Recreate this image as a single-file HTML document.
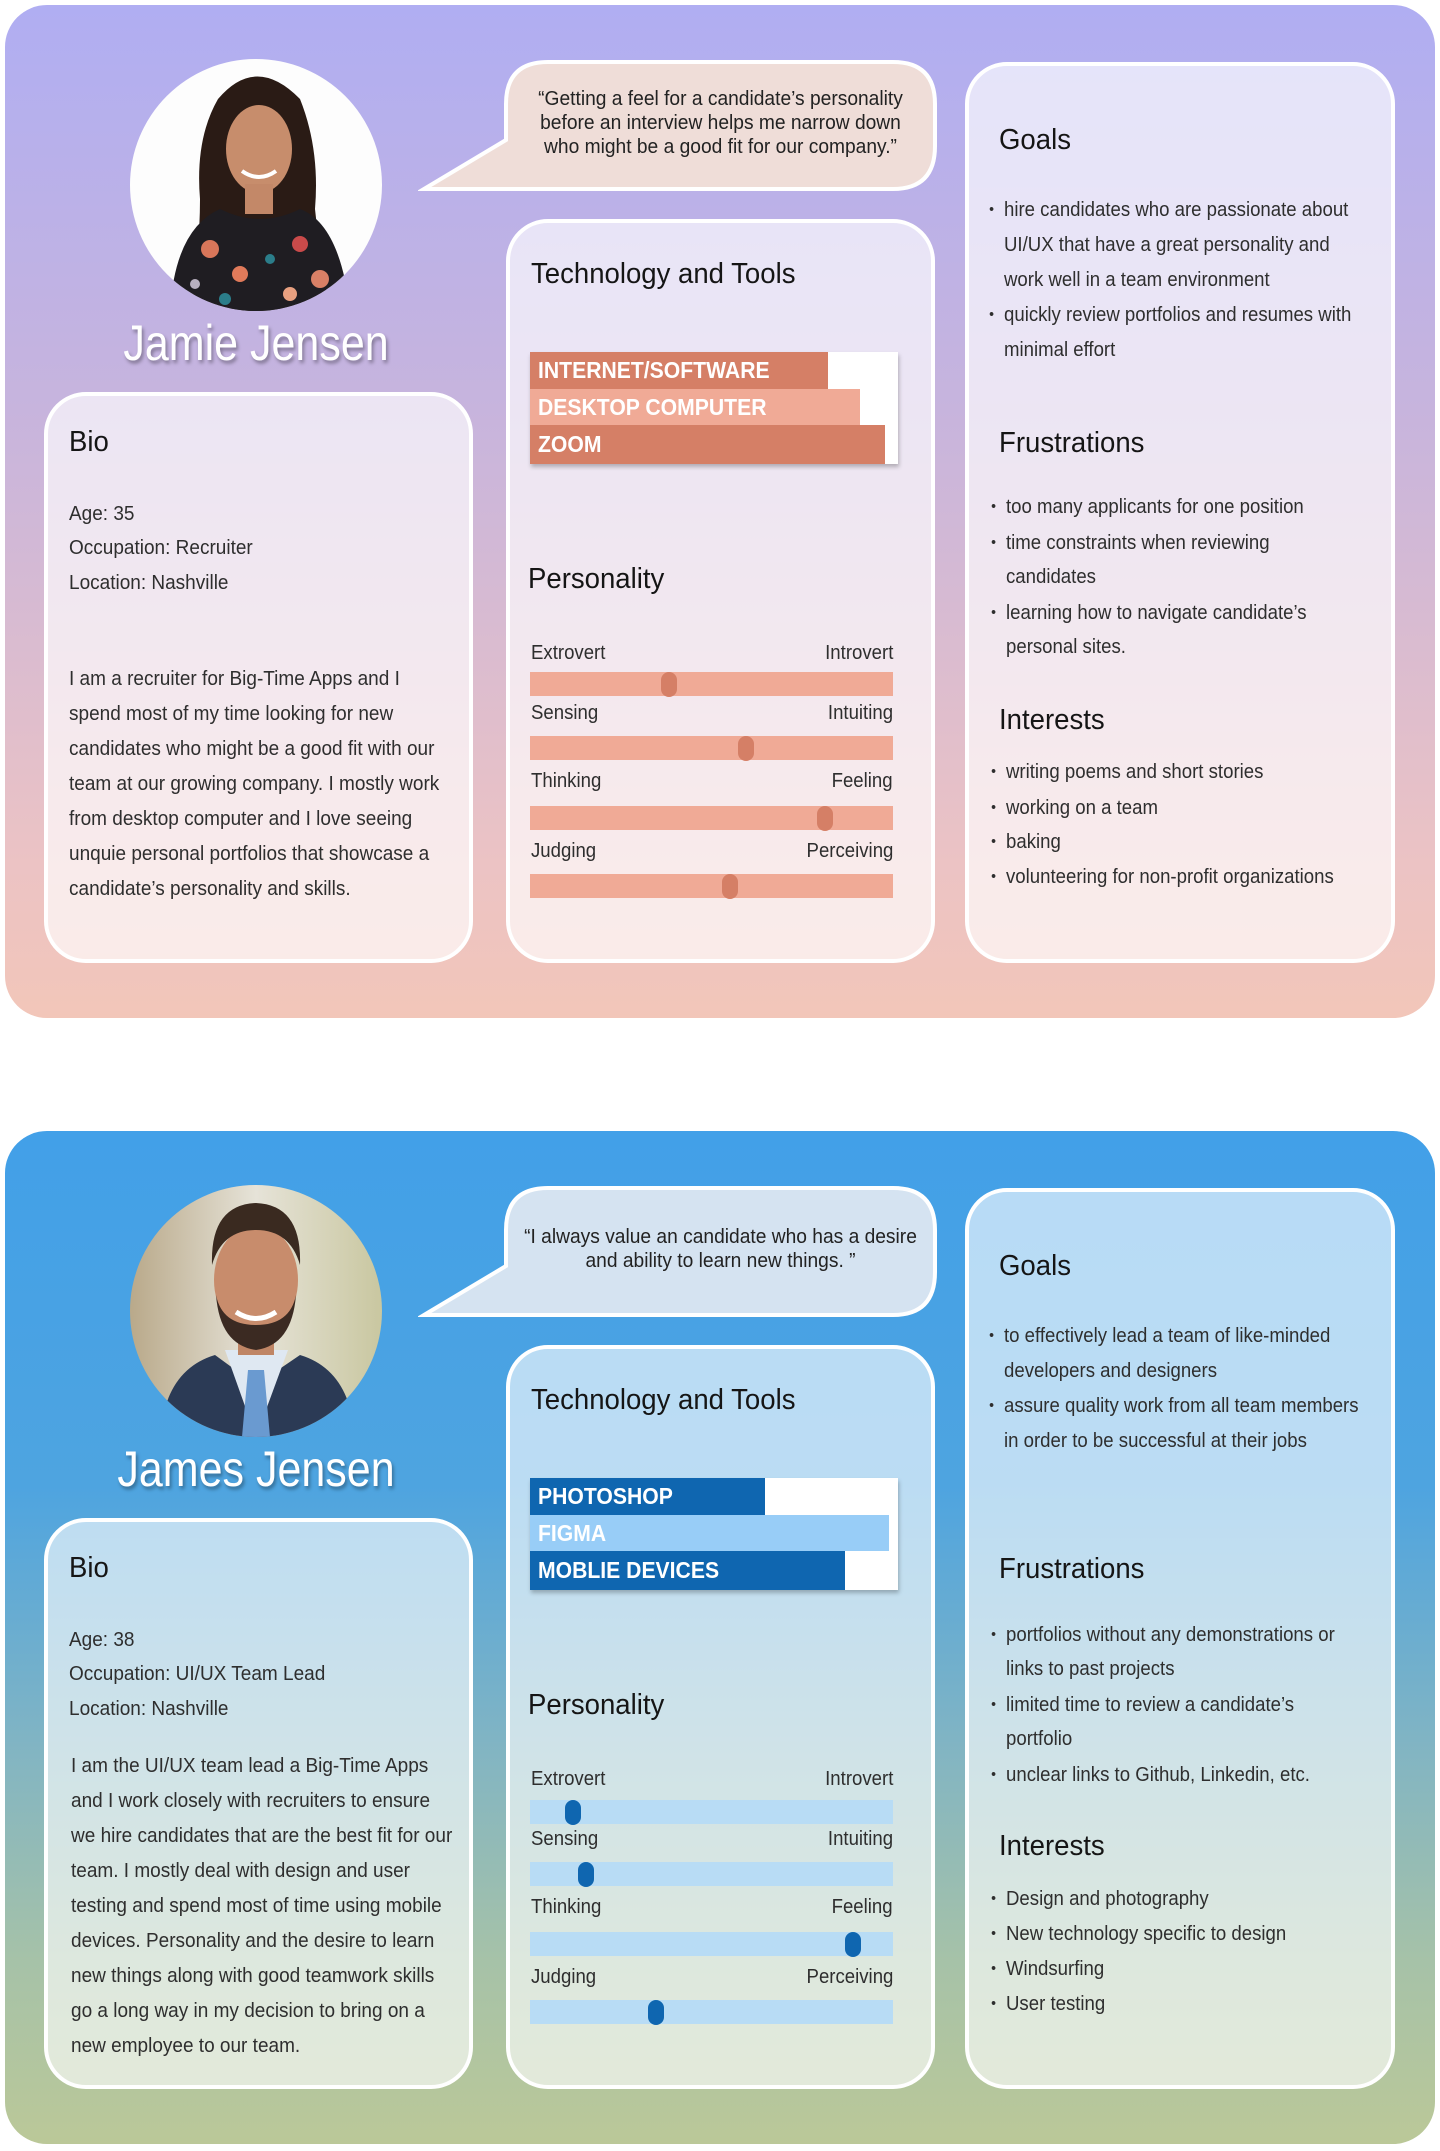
<!DOCTYPE html>
<html><head><meta charset="utf-8">
<style>
*{margin:0;padding:0;box-sizing:border-box}
html,body{width:1440px;height:2151px;background:#fff;overflow:hidden;font-family:"Liberation Sans",sans-serif;color:#2b2b2b}
.wrap{position:absolute;left:0;width:1440px;height:1020px}
.card{position:absolute;left:5px;top:5px;width:1430px;height:1013px;border-radius:42px}
.box{position:absolute;border:4px solid #fff;border-radius:42px}
.t{position:absolute;white-space:nowrap;transform:scaleX(.93);transform-origin:0 50%;font-size:20px;line-height:26px;height:26px;color:#2e2e2e}
.bio{transform:scaleX(.95)}
.r{left:auto!important;right:547px;transform-origin:100% 50%}
.h{position:absolute;white-space:nowrap;transform:scaleX(.95);transform-origin:0 50%;font-size:29px;line-height:36px;height:36px;color:#151515}
.b::before{content:"•";position:absolute;left:-16px;font-size:15px}
.q{position:absolute;left:506px;width:429px;text-align:center;font-size:20px;line-height:24px;color:#222;transform:scaleX(.96);white-space:nowrap}
.name{position:absolute;left:56px;width:400px;text-align:center;font-size:50px;line-height:60px;color:#fff;text-shadow:2px 3px 4px rgba(0,0,0,.35);transform:scaleX(.86)}
.chart{position:absolute;left:530px;top:352px;width:368px;height:112px;background:#fff;box-shadow:1px 3px 4px rgba(0,0,0,.25)}
.bar{position:absolute;left:0;color:#fff;font-weight:bold;font-size:23px;padding-left:8px;white-space:nowrap;display:flex;align-items:center}
.bar span{display:inline-block;transform:scaleX(.92);transform-origin:0 50%}
.track{position:absolute;left:530px;width:363px;height:24px}
.thumb{position:absolute;top:0;width:16px;height:25px;border-radius:8px}
</style></head><body>

<!-- CARD 1 -->
<div class="wrap" style="top:0">
<div class="card" style="background:linear-gradient(#b0aef2 0%,#c7b4dd 40%,#ecc3c4 85%,#f2c6b9 100%)"></div>

<svg style="position:absolute;left:130px;top:59px" width="252" height="252" viewBox="0 0 252 252">
<defs><clipPath id="c1"><circle cx="126" cy="126" r="126"/></clipPath></defs>
<g clip-path="url(#c1)">
<rect width="252" height="252" fill="#fdfdfd"/>
<path d="M88 40 Q126 -5 170 40 Q190 90 185 150 Q190 200 200 252 L60 252 Q70 190 70 140 Q65 80 88 40Z" fill="#2a1b15"/>
<ellipse cx="129" cy="90" rx="33" ry="44" fill="#c78d6c"/>
<rect x="115" y="125" width="28" height="30" fill="#c38868"/>
<path d="M40 252 Q45 170 90 150 Q130 170 170 150 Q210 165 220 252Z" fill="#1f1d22"/>
<circle cx="80" cy="190" r="9" fill="#d8765a"/><circle cx="110" cy="215" r="8" fill="#e07a5a"/>
<circle cx="170" cy="185" r="8" fill="#c94a4a"/><circle cx="190" cy="220" r="9" fill="#d98066"/>
<circle cx="140" cy="200" r="5" fill="#2b7d8a"/><circle cx="95" cy="240" r="6" fill="#2b7d8a"/>
<circle cx="160" cy="235" r="7" fill="#e8a080"/><circle cx="65" cy="225" r="5" fill="#b8b0c0"/>
<path d="M112 112 Q129 124 146 112" stroke="#fff" stroke-width="4" fill="none"/>
</g></svg>
<div class="name" style="top:313px">Jamie Jensen</div>

<svg style="position:absolute;left:418px;top:58px" width="522" height="137">
<path d="M130 4 H475 Q517 4 517 46 V88 Q517 131 475 131 H6 L88 82 V46 Q88 4 130 4Z" fill="#efddd8" stroke="#fff" stroke-width="4"/>
</svg>
<div class="q" style="top:87px">“Getting a feel for a candidate’s personality</div>
<div class="q" style="top:111px">before an interview helps me narrow down</div>
<div class="q" style="top:135px">who might be a good fit for our company.”</div>

<div class="box" style="left:44px;top:392px;width:429px;height:571px;background:rgba(255,255,255,.66)"></div>
<div class="box" style="left:506px;top:219px;width:429px;height:744px;background:rgba(255,255,255,.66)"></div>
<div class="box" style="left:965px;top:62px;width:430px;height:901px;background:rgba(255,255,255,.66)"></div>

<div class="h" style="left:69px;top:424px">Bio</div>
<div class="t bio" style="left:69px;top:501px">Age: 35</div>
<div class="t bio" style="left:69px;top:535px">Occupation: Recruiter</div>
<div class="t bio" style="left:69px;top:570px">Location: Nashville</div>
<div class="t bio" style="left:69px;top:666px">I am a recruiter for Big-Time Apps and I</div>
<div class="t bio" style="left:69px;top:701px">spend most of my time looking for new</div>
<div class="t bio" style="left:69px;top:736px">candidates who might be a good fit with our</div>
<div class="t bio" style="left:69px;top:771px">team at our growing company. I mostly work</div>
<div class="t bio" style="left:69px;top:806px">from desktop computer and I love seeing</div>
<div class="t bio" style="left:69px;top:841px">unquie personal portfolios that showcase a</div>
<div class="t bio" style="left:69px;top:876px">candidate’s personality and skills.</div>

<div class="h" style="left:531px;top:256px">Technology and Tools</div>
<div class="chart">
<div class="bar" style="top:0;height:37px;width:298px;background:#d57f66"><span>INTERNET/SOFTWARE</span></div>
<div class="bar" style="top:37px;height:36px;width:330px;background:#f0aa96"><span>DESKTOP COMPUTER</span></div>
<div class="bar" style="top:73px;height:39px;width:355px;background:#d57f66"><span>ZOOM</span></div>
</div>

<div class="h" style="left:528px;top:561px">Personality</div>
<div class="t" style="left:531px;top:640px">Extrovert</div><div class="t r" style="left:0;top:640px">Introvert</div>
<div class="track" style="top:672px;background:#f0aa96"><div class="thumb" style="left:131px;background:#d57f66"></div></div>
<div class="t" style="left:531px;top:700px">Sensing</div><div class="t r" style="left:0;top:700px">Intuiting</div>
<div class="track" style="top:736px;background:#f0aa96"><div class="thumb" style="left:208px;background:#d57f66"></div></div>
<div class="t" style="left:531px;top:768px">Thinking</div><div class="t r" style="left:0;top:768px">Feeling</div>
<div class="track" style="top:806px;background:#f0aa96"><div class="thumb" style="left:287px;background:#d57f66"></div></div>
<div class="t" style="left:531px;top:838px">Judging</div><div class="t r" style="left:0;top:838px">Perceiving</div>
<div class="track" style="top:874px;background:#f0aa96"><div class="thumb" style="left:192px;background:#d57f66"></div></div>

<div class="h" style="left:999px;top:122px">Goals</div>
<div class="t b" style="left:1004px;top:197px">hire candidates who are passionate about</div>
<div class="t" style="left:1004px;top:232px">UI/UX that have a great personality and</div>
<div class="t" style="left:1004px;top:267px">work well in a team environment</div>
<div class="t b" style="left:1004px;top:302px">quickly review portfolios and resumes with</div>
<div class="t" style="left:1004px;top:337px">minimal effort</div>
<div class="h" style="left:999px;top:425px">Frustrations</div>
<div class="t b" style="left:1006px;top:494px">too many applicants for one position</div>
<div class="t b" style="left:1006px;top:530px">time constraints when reviewing</div>
<div class="t" style="left:1006px;top:564px">candidates</div>
<div class="t b" style="left:1006px;top:600px">learning how to navigate candidate’s</div>
<div class="t" style="left:1006px;top:634px">personal sites.</div>
<div class="h" style="left:999px;top:702px">Interests</div>
<div class="t b" style="left:1006px;top:759px">writing poems and short stories</div>
<div class="t b" style="left:1006px;top:795px">working on a team</div>
<div class="t b" style="left:1006px;top:829px">baking</div>
<div class="t b" style="left:1006px;top:864px">volunteering for non-profit organizations</div>
</div>

<!-- CARD 2 -->
<div class="wrap" style="top:1126px">
<div class="card" style="background:linear-gradient(#42a0e8 0%,#4ea4e0 35%,#80b4c4 60%,#a6c2a8 82%,#bbc898 100%)"></div>

<svg style="position:absolute;left:130px;top:59px" width="252" height="252" viewBox="0 0 252 252">
<defs><clipPath id="c2"><circle cx="126" cy="126" r="126"/></clipPath>
<linearGradient id="bg2" x1="0" x2="1"><stop offset="0" stop-color="#b9a98a"/><stop offset=".5" stop-color="#e6e3d8"/><stop offset="1" stop-color="#c9c7a0"/></linearGradient></defs>
<g clip-path="url(#c2)">
<rect width="252" height="252" fill="url(#bg2)"/>
<path d="M30 252 Q35 185 85 170 L126 200 L170 170 Q220 185 225 252Z" fill="#2b3a55"/>
<path d="M95 165 L126 252 L158 165 Z" fill="#dfe8f2"/>
<path d="M118 185 L134 185 L140 252 L112 252Z" fill="#6a9ad0"/>
<rect x="108" y="130" width="36" height="40" fill="#bf8565"/>
<ellipse cx="126" cy="95" rx="42" ry="55" fill="#c88c6c"/>
<path d="M86 110 Q90 160 126 165 Q162 160 166 110 Q160 140 126 140 Q92 140 86 110Z" fill="#3b2a22"/>
<path d="M82 80 Q80 20 126 18 Q172 20 170 80 Q160 45 126 45 Q92 45 82 80Z" fill="#3a2a20"/>
<path d="M106 127 Q126 140 146 127" stroke="#fff" stroke-width="5" fill="none"/>
</g></svg>
<div class="name" style="top:313px">James Jensen</div>

<svg style="position:absolute;left:418px;top:58px" width="522" height="137">
<path d="M130 4 H475 Q517 4 517 46 V88 Q517 131 475 131 H6 L88 82 V46 Q88 4 130 4Z" fill="#d5e3f1" stroke="#fff" stroke-width="4"/>
</svg>
<div class="q" style="top:99px">“I always value an candidate who has a desire</div>
<div class="q" style="top:123px">and ability to learn new things.  ”</div>

<div class="box" style="left:44px;top:392px;width:429px;height:571px;background:rgba(255,255,255,.62)"></div>
<div class="box" style="left:506px;top:219px;width:429px;height:744px;background:rgba(255,255,255,.62)"></div>
<div class="box" style="left:965px;top:62px;width:430px;height:901px;background:rgba(255,255,255,.62)"></div>

<div class="h" style="left:69px;top:424px">Bio</div>
<div class="t bio" style="left:69px;top:501px">Age: 38</div>
<div class="t bio" style="left:69px;top:535px">Occupation: UI/UX Team Lead</div>
<div class="t bio" style="left:69px;top:570px">Location: Nashville</div>
<div class="t bio" style="left:71px;top:627px">I am the UI/UX team lead a Big-Time Apps</div>
<div class="t bio" style="left:71px;top:662px">and I work closely with recruiters to ensure</div>
<div class="t bio" style="left:71px;top:697px">we hire candidates that are the best fit for our</div>
<div class="t bio" style="left:71px;top:732px">team. I mostly deal with design and user</div>
<div class="t bio" style="left:71px;top:767px">testing and spend most of time using mobile</div>
<div class="t bio" style="left:71px;top:802px">devices. Personality and the desire to learn</div>
<div class="t bio" style="left:71px;top:837px">new things along with good teamwork skills</div>
<div class="t bio" style="left:71px;top:872px">go a long way in my decision to bring on a</div>
<div class="t bio" style="left:71px;top:907px">new employee to our team.</div>

<div class="h" style="left:531px;top:256px">Technology and Tools</div>
<div class="chart">
<div class="bar" style="top:0;height:37px;width:235px;background:#0f66b0"><span>PHOTOSHOP</span></div>
<div class="bar" style="top:37px;height:36px;width:359px;background:#98cdf7"><span>FIGMA</span></div>
<div class="bar" style="top:73px;height:39px;width:315px;background:#0f66b0"><span>MOBLIE DEVICES</span></div>
</div>

<div class="h" style="left:528px;top:561px">Personality</div>
<div class="t" style="left:531px;top:640px">Extrovert</div><div class="t r" style="left:0;top:640px">Introvert</div>
<div class="track" style="top:674px;background:#b8dcf5"><div class="thumb" style="left:35px;background:#0f66b0"></div></div>
<div class="t" style="left:531px;top:700px">Sensing</div><div class="t r" style="left:0;top:700px">Intuiting</div>
<div class="track" style="top:736px;background:#b8dcf5"><div class="thumb" style="left:48px;background:#0f66b0"></div></div>
<div class="t" style="left:531px;top:768px">Thinking</div><div class="t r" style="left:0;top:768px">Feeling</div>
<div class="track" style="top:806px;background:#b8dcf5"><div class="thumb" style="left:315px;background:#0f66b0"></div></div>
<div class="t" style="left:531px;top:838px">Judging</div><div class="t r" style="left:0;top:838px">Perceiving</div>
<div class="track" style="top:874px;background:#b8dcf5"><div class="thumb" style="left:118px;background:#0f66b0"></div></div>

<div class="h" style="left:999px;top:122px">Goals</div>
<div class="t b" style="left:1004px;top:197px">to effectively lead a team of  like-minded</div>
<div class="t" style="left:1004px;top:232px">developers and designers</div>
<div class="t b" style="left:1004px;top:267px">assure quality work from all team members</div>
<div class="t" style="left:1004px;top:302px">in order to be successful at their jobs</div>
<div class="h" style="left:999px;top:425px">Frustrations</div>
<div class="t b" style="left:1006px;top:496px">portfolios without any demonstrations or</div>
<div class="t" style="left:1006px;top:530px">links to past projects</div>
<div class="t b" style="left:1006px;top:566px">limited time to review a candidate’s</div>
<div class="t" style="left:1006px;top:600px">portfolio</div>
<div class="t b" style="left:1006px;top:636px">unclear links to Github, Linkedin, etc.</div>
<div class="h" style="left:999px;top:702px">Interests</div>
<div class="t b" style="left:1006px;top:760px">Design and photography</div>
<div class="t b" style="left:1006px;top:795px">New technology specific to design</div>
<div class="t b" style="left:1006px;top:830px">Windsurfing</div>
<div class="t b" style="left:1006px;top:865px">User testing</div>
</div>

</body></html>
